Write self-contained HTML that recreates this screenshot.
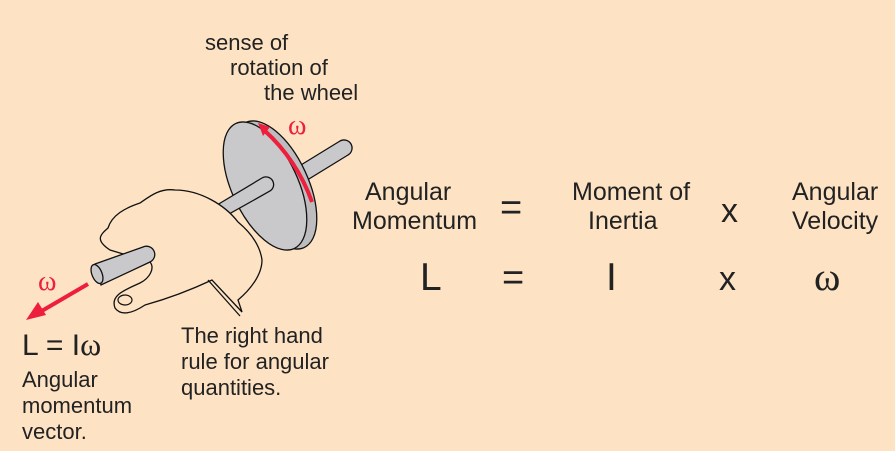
<!DOCTYPE html>
<html><head><style>
body{margin:0;width:895px;height:451px;background:#fde3c4;overflow:hidden}
svg{display:block}
text{font-family:"Liberation Sans",sans-serif;fill:#222}
.s{font-family:"Liberation Serif",serif}
</style></head><body>
<svg width="895" height="451" viewBox="0 0 895 451">
<rect width="895" height="451" fill="#fde3c4"/>
<path d="M296 168 L340 141 A8 8 0 0 1 348 155 L304 182 Z" fill="#c9c9cc" stroke="#111" stroke-width="1.3"/>
<ellipse cx="275" cy="185" rx="33" ry="69" transform="rotate(-25 275 185)" fill="#bdbdc0" stroke="#111" stroke-width="1.3"/>
<ellipse cx="265" cy="186" rx="33" ry="69" transform="rotate(-25 265 186)" fill="#c9c9cc" stroke="#111" stroke-width="1.3"/>
<path d="M264 130 Q297 160 312 202" fill="none" stroke="#ee1f3c" stroke-width="4"/>
<path d="M258 123 L270 127 L263 136 Z" fill="#ee1f3c"/>
<text x="288" y="134" class="s" font-size="28" style="fill:#ee1f3c">ω</text>
<path d="M212 208 L262 178 A7 7 0 0 1 270 191 L222 218 Z" fill="#c9c9cc" stroke="#111" stroke-width="1.3"/>
<path d="M238 222 C225 205 200 190 175 190 C160 188 150 196 140 203 C125 208 112 215 108 228 C100 235 95 240 110 250 L150 262 C155 268 150 278 140 283 C125 290 110 295 115 308 C120 315 130 315 145 305 C170 298 195 288 212 280 L242 312 L238 300 C250 290 262 275 262 260 C260 245 250 232 238 222 Z" fill="#fde3c4" stroke="#111" stroke-width="1.3"/>
<path d="M95 264 L143 247 A7 7 0 0 1 150 262 L101 285 Z" fill="#c9c9cc" stroke="#111" stroke-width="1.3"/>
<ellipse cx="97" cy="274" rx="5" ry="10" transform="rotate(-22 97 274)" fill="#c9c9cc" stroke="#111" stroke-width="1.3"/>
<ellipse cx="125" cy="300" rx="7" ry="5" fill="none" stroke="#111" stroke-width="1.2"/>
<path d="M208 280 L240 316" stroke="#111" stroke-width="1.3"/>
<path d="M88 284 L40 312" stroke="#ee1f3c" stroke-width="4"/>
<path d="M26 320 L38 302 L46 315 Z" fill="#ee1f3c"/>
<text x="38" y="290" class="s" font-size="28" style="fill:#ee1f3c">ω</text>
<text x="205" y="50" font-size="22">sense of</text>
<text x="230" y="75" font-size="22">rotation of</text>
<text x="264" y="100" font-size="22">the wheel</text>
<text x="22" y="355" font-size="30">L = I<tspan class="s" font-size="32">ω</tspan></text>
<text x="22" y="387" font-size="22">Angular</text>
<text x="22" y="413" font-size="22">momentum</text>
<text x="22" y="439" font-size="22">vector.</text>
<text x="181" y="343" font-size="22">The right hand</text>
<text x="181" y="369" font-size="22">rule for angular</text>
<text x="181" y="395" font-size="22">quantities.</text>
<text x="365" y="200" font-size="25">Angular</text>
<text x="352" y="229" font-size="25">Momentum</text>
<text x="500" y="220" font-size="38">=</text>
<text x="572" y="200" font-size="25">Moment of</text>
<text x="588" y="229" font-size="25">Inertia</text>
<text x="721" y="222" font-size="34">x</text>
<text x="792" y="200" font-size="25">Angular</text>
<text x="792" y="229" font-size="25">Velocity</text>
<text x="420" y="290" font-size="39">L</text>
<text x="502" y="290" font-size="38">=</text>
<text x="606" y="290" font-size="39">I</text>
<text x="719" y="290" font-size="34">x</text>
<text x="814" y="290" class="s" font-size="40">ω</text>
</svg>
</body></html>
